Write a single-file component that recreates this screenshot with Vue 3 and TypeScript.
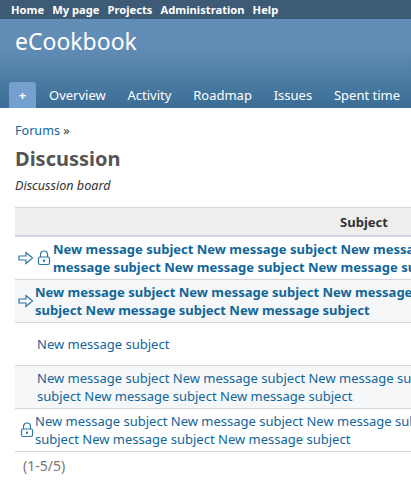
<script setup lang="ts">
const topItems = ['Home', 'My page', 'Projects', 'Administration', 'Help']
const tabs = ['Overview', 'Activity', 'Roadmap', 'Issues', 'Spent time', 'Gantt', 'Calendar']

const subject = Array(7).fill('New message subject').join(' ')

const rows = [
  { sticky: true, locked: true, cls: 'icons' },
  { sticky: true, locked: false, cls: 'icons' },
  { sticky: false, locked: false, cls: 'plain', text: 'New message subject' },
  { sticky: false, locked: false, cls: 'plain' },
  { sticky: false, locked: true, cls: 'icons' },
]
</script>

<template>
  <div class="page">
    <nav class="top-menu">
      <a v-for="item in topItems" :key="item">{{ item }}</a>
    </nav>

    <header class="header">
      <h1>eCookbook</h1>
      <div class="tabs">
        <span class="new-tab">+</span>
        <a v-for="tab in tabs" :key="tab">{{ tab }}</a>
      </div>
    </header>

    <main class="content">
      <p class="breadcrumb"><a>Forums</a> »</p>
      <h2>Discussion</h2>
      <p class="description">Discussion board</p>

      <div class="table-wrapper">
        <table>
          <thead>
            <tr><th>Subject</th></tr>
          </thead>
          <tbody>
            <tr v-for="(row, i) in rows" :key="i" :class="{ even: i % 2 === 1 }">
              <td>
                <div :class="['cell', row.cls]">
                  <svg v-if="row.sticky" class="icon arrow" viewBox="0 0 16 14" width="16" height="14">
                    <path d="M1 5h7V1.500L14.500 7 8 12.500V9H1z" />
                  </svg>
                  <svg v-if="row.locked" class="icon lock" :class="{ solo: !row.sticky }" viewBox="0 0 14 16" width="14" height="16">
                    <path d="M3.500 7V4.500a3.500 3.500 0 0 1 7 0V7" />
                    <rect x="1.500" y="7" width="11" height="7.500" rx="1.500" />
                    <circle cx="7" cy="10.700" r=".6" />
                  </svg>
                  <a :class="{ bold: row.sticky }">{{ row.text ?? subject }}</a>
                </div>
              </td>
            </tr>
          </tbody>
        </table>
      </div>

      <p class="pagination">(1-5/5)</p>
    </main>
  </div>
</template>

<style>
html,
body {
  margin: 0;
  overflow: hidden;
  background: #fff;
}
</style>

<style scoped>
.page {
  width: 411px;
  height: 497px;
  overflow: hidden;
  font-family: "Noto Sans", sans-serif;
  font-size: 13px;
  color: #333;
}

.top-menu {
  display: flex;
  gap: 8px;
  height: 19px;
  padding-left: 11px;
  background: #3e5b76;
  color: #fff;
  font-size: 11.2px;
  font-weight: 700;
  line-height: 19px;
  white-space: nowrap;
}

.header {
  height: 89px;
  display: flex;
  flex-direction: column;
  justify-content: space-between;
  padding-left: 15px;
  background: linear-gradient(#628db6 30%, #3a6d95);
  color: #fff;
  overflow: hidden;
}

.header h1 {
  margin: 4px 0 0;
  font-size: 23px;
  font-weight: 400;
  line-height: 36px;
}

.tabs {
  display: flex;
  align-items: center;
  height: 26px;
  margin-left: -6px;
  font-size: 13px;
  white-space: nowrap;
}

.new-tab {
  flex: none;
  width: 27px;
  height: 26px;
  margin-right: 13px;
  border-radius: 3px 3px 0 0;
  background: #759fcf;
  text-align: center;
  line-height: 26px;
  font-weight: 700;
}

.tabs a {
  flex: none;
  margin-right: 21.8px;
}

.content {
  padding: 0 0 0 15px;
}

.breadcrumb {
  margin: 14px 0 0;
  line-height: 18px;
  font-size: 12.6px;
}

.breadcrumb a,
td a {
  color: #169;
}

h2 {
  margin: 5px 0 0;
  font-size: 20px;
  font-weight: 700;
  line-height: 28px;
  color: #555;
}

.description {
  margin: 4px 0 0;
  font-size: 12.6px;
  font-style: italic;
  line-height: 18px;
}

.table-wrapper {
  width: 396px;
  margin-top: 12px;
  overflow: hidden;
}

table {
  width: 698px;
  border-collapse: collapse;
  table-layout: fixed;
}

th {
  height: 27px;
  padding: 0;
  background: #eee;
  border-top: 1px solid #d0d7de;
  border-bottom: 2px solid #d0d7de;
  font-size: 13px;
  color: #333;
}

td {
  padding: 0;
  border-bottom: 1px solid #d0d7de;
  line-height: 18px;
  font-size: 13px;
}

.even td {
  background: #f6f7f8;
}

.cell {
  display: flex;
  align-items: center;
  min-height: 36px;
  padding: 3px 8px 3px 0;
}

.cell.icons {
  padding-left: 20px;
}

.cell.plain {
  padding-left: 22px;
}

a.bold {
  font-weight: 700;
}

.icon {
  flex: none;
  fill: none;
  stroke: #2a76a6;
  stroke-width: 1.2;
}

.arrow {
  margin-left: -17px;
  margin-right: 1px;
}

.lock {
  margin: 0 2px 0 2px;
}

.lock.solo {
  margin: 0 1px 0 -15px;
}

.pagination {
  margin: 5px 0 0 8px;
  line-height: 18px;
  font-size: 14px;
  color: #777;
}
</style>
